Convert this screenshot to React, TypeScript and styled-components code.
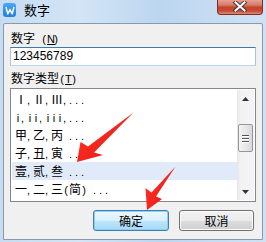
import React from "react";
import styled, { createGlobalStyle } from "styled-components";

const Global = createGlobalStyle`
  html, body { margin: 0; padding: 0; overflow: hidden; }
  body { width: 266px; height: 242px; font-family: "Noto Sans CJK SC", "Noto Sans", sans-serif; }
`;

const Window = styled.div`
  position: relative;
  width: 266px;
  height: 242px;
  box-sizing: border-box;
  display: flex;
  flex-direction: column;
  background: linear-gradient(90deg, #c6dcf1 0%, #d3e5f6 30%, #bcd6f0 60%, #cfe2f4 100%);
`;

const TitleBar = styled.div`
  height: 23px;
  display: flex;
  align-items: flex-start;
  position: relative;
`;

const AppIcon = styled.div`
  width: 13px;
  height: 14px;
  margin: 3px 0 0 3px;
  border-radius: 3px;
  background: linear-gradient(180deg, #4aa7f5 0%, #1f7fe0 100%);
  display: flex;
  align-items: center;
  justify-content: center;
`;

const Title = styled.div`
  margin: 2px 0 0 8px;
  font-size: 13px;
  line-height: 16px;
  color: #000;
`;

const CloseButton = styled.div`
  position: absolute;
  left: 217px;
  top: -1px;
  width: 44px;
  height: 15px;
  border: 1px solid #7d2c22;
  border-top: none;
  border-radius: 0 0 4px 4px;
  background: linear-gradient(180deg, #e9a99c 0%, #d77b6a 40%, #c2452f 55%, #c94a34 80%, #de8e78 100%);
  display: flex;
  align-items: center;
  justify-content: center;
`;

const Body = styled.div`
  flex: 1;
  margin: 0 3px 2px 3px;
  border: 1px solid #8a9aac;
  border-radius: 2px 2px 0 0;
  background: #f0f0f0;
  padding: 6px 6px 0 6px;
  display: flex;
  flex-direction: column;
`;

const Label = styled.div<{ $gap?: number }>`
  font-size: 12px;
  line-height: 16px;
  height: 16px;
  color: #000;
  margin-top: ${(p) => p.$gap ?? 0}px;
  padding-left: 1px;
  white-space: pre;
`;

const Half = styled.span<{ $align?: string; $u?: boolean }>`
  display: inline-block;
  width: 6px;
  text-align: ${(p) => p.$align ?? "center"};
  font-family: "Liberation Sans", sans-serif;
  font-size: 11px;
  text-decoration: ${(p) => (p.$u ? "underline" : "none")};
`;

const Input = styled.div`
  margin-top: 1px;
  height: 19px;
  box-sizing: border-box;
  border: 1px solid #a4c6e0;
  border-top-color: #3d7bad;
  border-bottom-color: #b7d9ed;
  background: #fff;
  font-family: "Liberation Sans", sans-serif;
  font-size: 12px;
  line-height: 17px;
  padding-left: 2px;
  color: #000;
`;

const ListBox = styled.div`
  margin-top: 2px;
  height: 114px;
  box-sizing: border-box;
  border: 1px solid #828790;
  background: #fff;
  padding: 1px;
  display: flex;
`;

const Rows = styled.div`
  flex: 1;
  display: flex;
  flex-direction: column;
`;

const Row = styled.div<{ $selected?: boolean }>`
  height: 18px;
  line-height: 18px;
  font-size: 12px;
  padding-left: 3px;
  color: #000;
  white-space: pre;
  background: ${(p) => (p.$selected ? "#e0eaf9" : "transparent")};
`;

const Full = styled.span`
  display: inline-block;
  width: 12px;
  text-align: center;
`;

const ScrollBar = styled.div`
  width: 17px;
  background: linear-gradient(90deg, #e6e6e6 0%, #f2f2f2 20%, #f4f4f4 100%);
  display: flex;
  flex-direction: column;
  align-items: center;
`;

const ArrowBox = styled.div`
  height: 17px;
  width: 17px;
  display: flex;
  align-items: center;
  justify-content: center;
`;

const Track = styled.div`
  flex: 1;
  width: 100%;
  display: flex;
  flex-direction: column;
  align-items: center;
`;

const Thumb = styled.div`
  margin-top: 17px;
  width: 15px;
  height: 28px;
  box-sizing: border-box;
  border: 1px solid #979797;
  border-radius: 2px;
  background: linear-gradient(90deg, #f3f3f3 0%, #e8e8e8 50%, #d8d8d8 100%);
  display: flex;
  flex-direction: column;
  align-items: center;
  justify-content: center;
  gap: 2px;
`;

const Grip = styled.div`
  width: 7px;
  height: 1px;
  background: #555;
  box-shadow: 0 1px 0 #fff;
`;

const ButtonRow = styled.div`
  margin-top: 8px;
  display: flex;
  justify-content: flex-end;
  gap: 10px;
  padding-right: 2px;
`;

const Button = styled.div<{ $primary?: boolean; $w: number }>`
  width: ${(p) => p.$w}px;
  height: 21px;
  box-sizing: border-box;
  border: 1px solid ${(p) => (p.$primary ? "#3c7fb1" : "#707070")};
  border-radius: 3px;
  background: ${(p) =>
    p.$primary
      ? "linear-gradient(180deg, #eaf6fd 0%, #d9f0fc 50%, #bee6fd 51%, #a7d9f5 100%)"
      : "linear-gradient(180deg, #f2f2f2 0%, #ebebeb 50%, #dddddd 51%, #cfcfcf 100%)"};
  box-shadow: ${(p) => (p.$primary ? "inset 0 0 0 1px #8ed0f5" : "inset 0 0 0 1px #fcfcfc")};
  font-size: 12px;
  line-height: 19px;
  text-align: center;
  color: #000;
`;

const Overlay = styled.svg`
  position: absolute;
  left: 0;
  top: 0;
  pointer-events: none;
`;

function Grid({ text }: { text: string }) {
  return (
    <>
      {Array.from(text).map((ch, i) => {
        if (ch.charCodeAt(0) < 128) {
          const left = ch === "," || ch === ".";
          return (
            <Half key={i} $align={left ? "left" : "center"}>
              {ch}
            </Half>
          );
        }
        return <Full key={i}>{ch}</Full>;
      })}
    </>
  );
}

const items: { t: string; sel?: boolean }[] = [
  { t: "Ⅰ,Ⅱ,Ⅲ,..." },
  { t: "i,ii,iii,..." },
  { t: "甲,乙,丙 ..." },
  { t: "子,丑,寅 ..." },
  { t: "壹,贰,叁 ...", sel: true },
  { t: "一,二,三(简) ..." },
];

export default function App() {
  return (
    <>
      <Global />
      <Window>
        <TitleBar>
          <AppIcon>
            <svg width="10" height="9" viewBox="0 0 10 9">
              <polyline points="1,1 2.8,8 5,3.5 7.2,8 9,1" fill="none" stroke="#fff" strokeWidth="1.4" strokeLinejoin="round" />
            </svg>
          </AppIcon>
          <Title>数字</Title>
          <CloseButton>
            <svg width="14" height="11" viewBox="0 0 14 11">
              <path d="M2.5 1.5 L11.5 9.5 M11.5 1.5 L2.5 9.5" stroke="#4a3a38" strokeWidth="4" strokeLinecap="square" />
              <path d="M2.5 1.5 L11.5 9.5 M11.5 1.5 L2.5 9.5" stroke="#ffffff" strokeWidth="2" strokeLinecap="square" />
            </svg>
          </CloseButton>
        </TitleBar>
        <Body>
          <Label>
            数字<Half> </Half>
            <Half>(</Half>
            <Half $u>N</Half>
            <Half>)</Half>
          </Label>
          <Input>123456789</Input>
          <Label $gap={4}>
            数字类型<Half>(</Half>
            <Half $u>T</Half>
            <Half>)</Half>
          </Label>
          <ListBox>
            <Rows>
              {items.map((it, i) => (
                <Row key={i} $selected={it.sel}>
                  <Grid text={it.t} />
                </Row>
              ))}
            </Rows>
            <ScrollBar>
              <ArrowBox>
                <svg width="7" height="4" viewBox="0 0 7 4">
                  <polygon points="3.5,0 7,4 0,4" fill="#333" />
                </svg>
              </ArrowBox>
              <Track>
                <Thumb>
                  <Grip />
                  <Grip />
                  <Grip />
                </Thumb>
              </Track>
              <ArrowBox>
                <svg width="7" height="4" viewBox="0 0 7 4">
                  <polygon points="0,0 7,0 3.5,4" fill="#333" />
                </svg>
              </ArrowBox>
            </ScrollBar>
          </ListBox>
          <ButtonRow>
            <Button $primary $w={76}>确定</Button>
            <Button $w={75}>取消</Button>
          </ButtonRow>
        </Body>
        <Overlay width="266" height="242" viewBox="0 0 266 242">
          <defs>
            <linearGradient id="rg" x1="0" y1="0" x2="1" y2="1">
              <stop offset="0" stopColor="#ff3b2f" />
              <stop offset="1" stopColor="#e8100c" />
            </linearGradient>
          </defs>
          <polygon points="77,162 80.5,142 88,146.5 133.5,112.5 94,152.5 103,155" fill="url(#rg)" />
          <polygon points="147,210 145.5,188 151.5,192.5 175.5,166.5 156,196.5 162,199" fill="url(#rg)" />
        </Overlay>
      </Window>
    </>
  );
}
